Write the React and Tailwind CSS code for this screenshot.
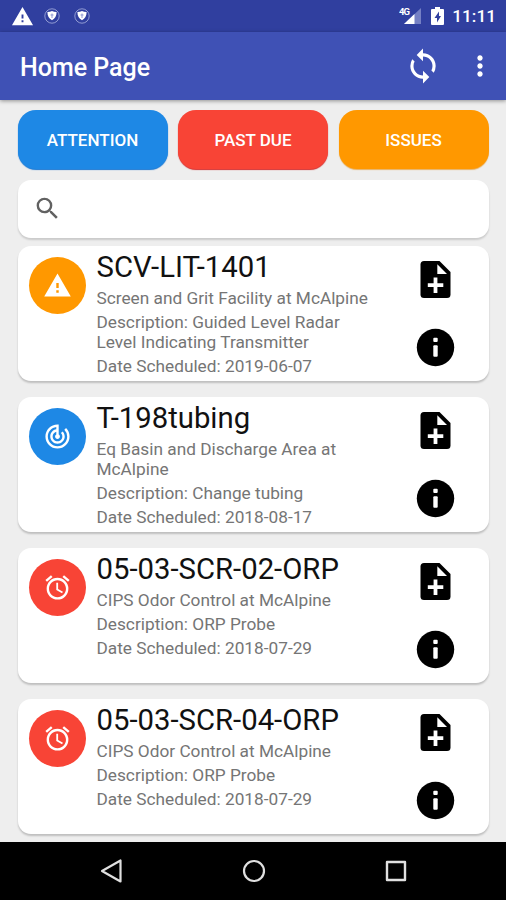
import { MdWarning, MdTrackChanges, MdAlarm, MdSync, MdMoreVert, MdSearch } from 'react-icons/md';

const filters = [
    { label: "ATTENTION", color: "bg-[#1e88e5] shadow-[0_1px_1px_#1976d2]" },
    { label: "PAST DUE", color: "bg-[#f84436] shadow-[0_1px_1px_#d32f2f]" },
    { label: "ISSUES", color: "bg-[#ff9800] shadow-[0_1px_1px_#e8b060]" },
]

const states = {
    issue: { color: "bg-[#ff9800]", Icon: MdWarning },
    attention: { color: "bg-[#1e88e5]", Icon: MdTrackChanges },
    due: { color: "bg-[#f84436]", Icon: MdAlarm },
}

const items = [
    { id: 1, state: "issue", name: "SCV-LIT-1401", place: "Screen and Grit Facility at McAlpine", description: "Guided Level Radar Level Indicating Transmitter", date: "2019-06-07" },
    { id: 2, state: "attention", name: "T-198tubing", place: "Eq Basin and Discharge Area at McAlpine", description: "Change tubing", date: "2018-08-17" },
    { id: 3, state: "due", name: "05-03-SCR-02-ORP", place: "CIPS Odor Control at McAlpine", description: "ORP Probe", date: "2018-07-29" },
    { id: 4, state: "due", name: "05-03-SCR-04-ORP", place: "CIPS Odor Control at McAlpine", description: "ORP Probe", date: "2018-07-29" },
]

const Shield = () => (
    <svg className="h-4 w-4" viewBox="0 0 16 16" fill="none">
        <circle cx="8" cy="8" r="7.2" stroke="#aab2e0" strokeWidth="0.8" />
        <path d="M8 3c1.300.7 2.800 1 4.600 1 0 4.300-1.500 6.500-4.600 8.300-3.100-1.800-4.600-4-4.600-8.300 1.800 0 3.300-.3 4.600-1z" fill="#fff" />
        <path d="M8 5.500v4.500M6.500 7h3" stroke="#8f99d3" strokeWidth="1" />
    </svg>
)

// note icon with the folded corner
const NoteAdd = () => (
    <svg className="h-[45px] w-[45px]" viewBox="0 0 45 45">
        <path d="M11 4h15.500L37.500 15v22.500a3.500 3.500 0 0 1-3.500 3.500H11a3.500 3.500 0 0 1-3.500-3.500v-30A3.500 3.500 0 0 1 11 4z" fill="#000" />
        <path d="M24.300 7.300v9.700H34z" fill="#fff" />
        <path d="M22.500 20.500v15.500M14.800 28.200h15.500" stroke="#fff" strokeWidth="3.800" />
    </svg>
)

const Info = () => (
    <svg className="h-[45px] w-[45px]" viewBox="0 0 45 45">
        <circle cx="22.500" cy="22.500" r="18.700" fill="#000" />
        <rect x="20.300" y="12.800" width="4.400" height="4.200" rx="1" fill="#fff" />
        <rect x="20.300" y="20.300" width="4.400" height="11.500" rx="1" fill="#fff" />
    </svg>
)

const StatusBar = () => (
    <div className="flex h-8 items-center bg-[#303f9f] pl-[11px] pr-[10px] text-white">
        <MdWarning className="h-[23px] w-[23px]" />
        <div className="ml-[10px] flex gap-[14px]">
            <Shield />
            <Shield />
        </div>
        <div className="ml-auto flex items-center">
            <svg className="h-[18px] w-[23px]" viewBox="0 0 23 18">
                <path d="M22 1v16H5z" fill="#7580c4" />
                <path d="M15.500 7.100V17H5z" fill="#fff" />
                <text x="0" y="8.300" fontSize="9.500" fontWeight="700" fill="#fff" fontFamily="Roboto, sans-serif" textLength="11">4G</text>
            </svg>
            <svg className="ml-[9px] h-[18px] w-[13px]" viewBox="0 0 13 18">
                <path d="M4 0h5v2h3a1 1 0 0 1 1 1v14a1 1 0 0 1-1 1H1a1 1 0 0 1-1-1V3a1 1 0 0 1 1-1h3z" fill="#fff" />
                <path d="M8 4.500L3.500 11H6v4.500L10 9H8z" fill="#303f9f" />
            </svg>
            <span className="ml-[8px] text-[17.250px] font-medium leading-8">11:11</span>
        </div>
    </div>
)

const Card = ({ item }) => {
    const { color, Icon } = states[item.state]

    return (
        <div className="flex h-[135px] rounded-[13px] bg-white pl-[11px] shadow-[0_2px_2px_rgba(0,0,0,0.2)]">
            <div className={`mt-[10.500px] flex h-[57px] w-[57px] shrink-0 items-center justify-center rounded-full text-white ${ color }`}>
                <Icon className="h-[29px] w-[29px]" />
            </div>
            <div className="ml-[11px] w-[280px] text-[17.250px] leading-5 text-[#757575]">
                <p className="mt-[4px] text-[29.300px] leading-[34px] text-[#111]">{ item.name }</p>
                <p className="mt-[4px]">{ item.place }</p>
                <p className="mt-1">{ `Description: ${ item.description }` }</p>
                <p className="mt-1">{ `Date Scheduled: ${ item.date }` }</p>
            </div>
            <div className="ml-[36px] mt-[11px] flex flex-col gap-[23px]">
                <NoteAdd />
                <Info />
            </div>
        </div>
    )
}

export default () => {
    return (
        <div className="flex h-[900px] w-[506px] flex-col overflow-hidden bg-[#eee] font-['Roboto',sans-serif]">
            <StatusBar />

            <div className="flex h-[68px] shrink-0 items-center bg-[#3f51b5] pl-5 pr-[10px] text-white shadow-[0_1px_4px_rgba(0,0,0,0.4)]">
                <span className="pt-[3px] text-[25px] font-medium">Home Page</span>
                <MdSync className="ml-auto h-[38px] w-[38px]" />
                <MdMoreVert className="ml-[22px] h-8 w-8" />
            </div>

            <div className="flex flex-1 flex-col px-[17.500px] pt-[10.300px]">
                <div className="flex gap-[10.500px]">
                    { filters.map( filter =>
                        <button key={ filter.label } className={`h-[58.500px] flex-1 rounded-[18px] pt-[2px] text-[17px] font-medium text-white ${ filter.color }`}>{ filter.label }</button>
                    ) }
                </div>

                {/* SEARCH */}
                <div className="mt-[11px] flex h-[58px] items-center rounded-[13px] bg-white pl-[15px] shadow-[0_2px_2px_rgba(0,0,0,0.15)]">
                    <MdSearch className="h-[29px] w-[29px] text-[#616161]" />
                </div>

                <div className="mt-[8.700px] flex flex-col gap-4">
                    { items.map( item => <Card key={ item.id } item={ item } /> ) }
                </div>
            </div>

            {/* ANDROID BUTTONS */}
            <div className="flex h-[58px] shrink-0 items-center justify-between bg-black pl-[100px] pr-[98px]">
                <svg className="h-6 w-6" viewBox="0 0 24 24" fill="none" stroke="#e0e0e0" strokeWidth="2.200" strokeLinejoin="round">
                    <path d="M20.500 1.500v21L2 12z" />
                </svg>
                <svg className="h-6 w-6" viewBox="0 0 24 24" fill="none" stroke="#e0e0e0" strokeWidth="2.200">
                    <circle cx="12" cy="12" r="10" />
                </svg>
                <svg className="h-6 w-6" viewBox="0 0 24 24" fill="none" stroke="#e0e0e0" strokeWidth="2.400" strokeLinejoin="round">
                    <rect x="3" y="3" width="18" height="18" />
                </svg>
            </div>
        </div>
    )
}
